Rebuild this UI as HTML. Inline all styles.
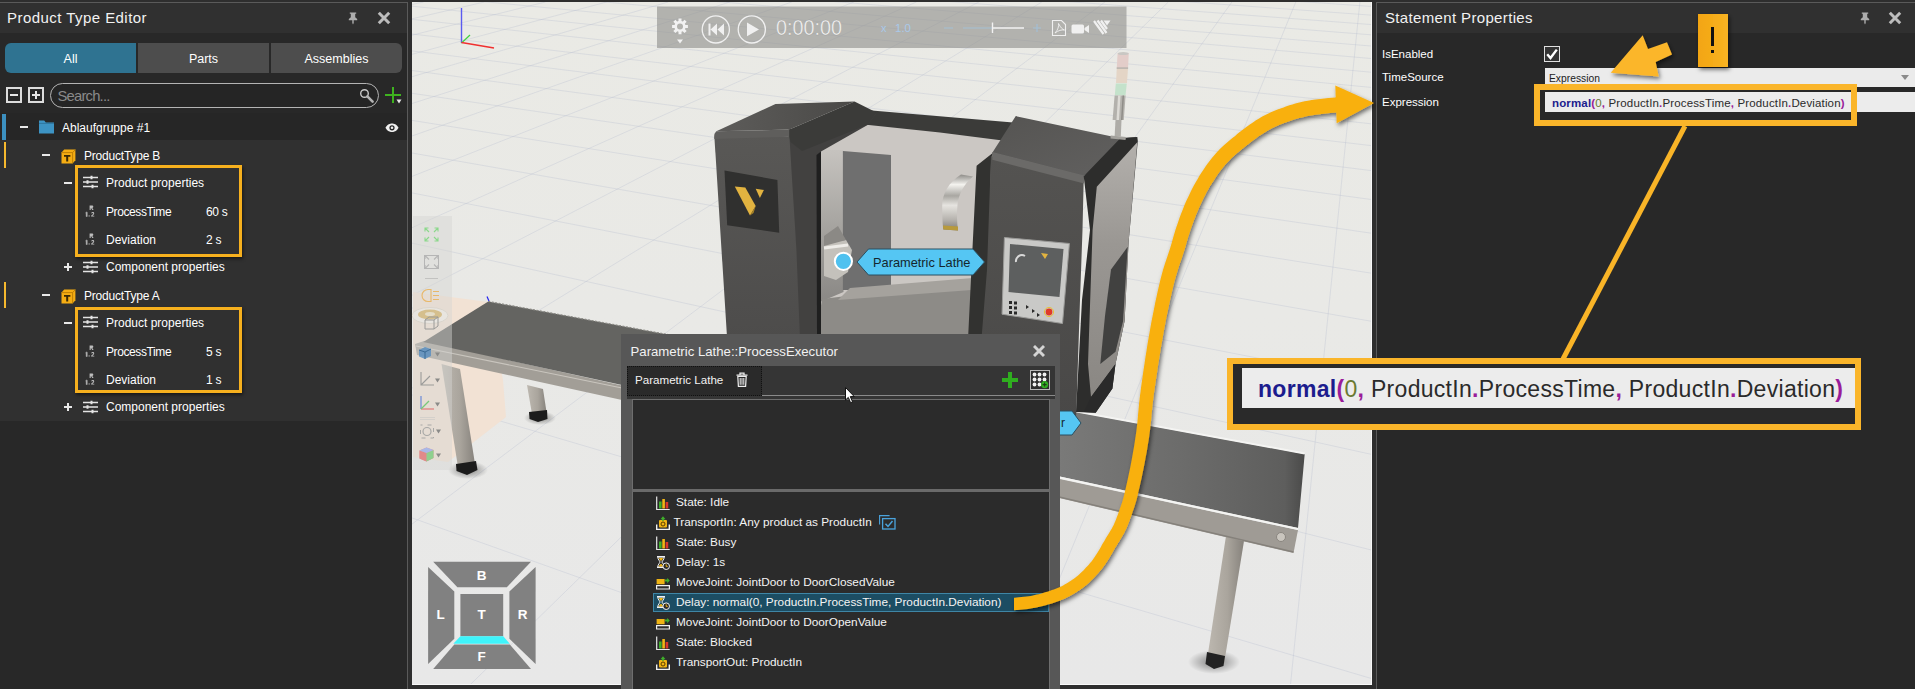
<!DOCTYPE html>
<html>
<head>
<meta charset="utf-8">
<title>Product Type Editor</title>
<style>
html,body{margin:0;padding:0;}
body{width:1915px;height:689px;overflow:hidden;background:#2e2e2e;position:relative;font-family:"Liberation Sans",sans-serif;color:#f0f0f0;}
.abs{position:absolute;}
.t{position:absolute;white-space:nowrap;line-height:1;}
/* left panel */
#lp{left:0;top:2px;width:408px;height:687px;background:#282828;border-top:1px solid #5a5a5a;border-right:1px solid #5a5a5a;box-sizing:border-box;}
#lp .title{left:0;top:0;width:407px;height:30px;background:#303030;}
.tab{position:absolute;top:40px;height:30px;background:#4d4d4d;text-align:center;font-size:12.5px;line-height:33px;color:#fff;height:30px;overflow:hidden;}
.row{position:absolute;left:0;width:407px;height:28px;background:#303030;}
.row .tx{position:absolute;top:0;line-height:28px;font-size:12.2px;color:#fff;white-space:nowrap;}
.pm{position:absolute;width:8px;height:2px;background:#e8e8e8;}
.pmv{position:absolute;width:2px;height:8px;background:#e8e8e8;}
.hl{position:absolute;border:3px solid #f6b01e;box-sizing:border-box;}
/* right panel */
#rp{left:1376px;top:2px;width:539px;height:687px;background:#282828;border-top:1px solid #5a5a5a;border-left:1px solid #5a5a5a;box-sizing:border-box;}
#rp .title{left:0;top:0;width:538px;height:30px;background:#303030;}
/* viewport */
#vp{left:412px;top:2px;width:960px;height:683px;background:linear-gradient(#eaeae5,#e9e9e6 45%,#e8e8e8);overflow:hidden;}
.expr b{color:#1c1c8e;font-weight:700;}.expr i{font-style:normal;color:#9a1c9a;font-weight:700;}.expr u{text-decoration:none;color:#6a7a32;}
/* dialog */
#dlg{left:621px;top:334px;width:439px;height:355px;background:#575757;}
</style>
</head>
<body>

<!-- ================= VIEWPORT ================= -->
<div id="vp" class="abs">
<svg id="scene" class="abs" style="left:0;top:0" width="960" height="683" viewBox="412 2 960 683">
<!--SCENE-->
<defs>
<linearGradient id="gFrontL" x1="0" y1="0" x2="0" y2="1"><stop offset="0" stop-color="#595856"/><stop offset="1" stop-color="#4d4c4b"/></linearGradient>
<linearGradient id="gFrontR" x1="0" y1="0" x2="0" y2="1"><stop offset="0" stop-color="#545351"/><stop offset="1" stop-color="#494847"/></linearGradient>
<linearGradient id="gChuck" x1="0" y1="0" x2="1" y2="0"><stop offset="0" stop-color="#8f8d88"/><stop offset="0.35" stop-color="#f1f0ec"/><stop offset="0.7" stop-color="#b5b2ac"/><stop offset="1" stop-color="#77746f"/></linearGradient>
<linearGradient id="gBelt" x1="0" y1="0" x2="1" y2="0"><stop offset="0" stop-color="#7a7a79"/><stop offset="0.5" stop-color="#6c6c6b"/><stop offset="0.92" stop-color="#5e5e5d"/><stop offset="1" stop-color="#4a4a49"/></linearGradient>
<linearGradient id="gLeg" x1="0" y1="0" x2="1" y2="0"><stop offset="0" stop-color="#bdb8b0"/><stop offset="0.55" stop-color="#aaa59d"/><stop offset="1" stop-color="#86827c"/></linearGradient>
<radialGradient id="gShadow"><stop offset="0" stop-color="#000" stop-opacity="0.45"/><stop offset="1" stop-color="#000" stop-opacity="0"/></radialGradient>
<filter id="blur1"><feGaussianBlur stdDeviation="0.6"/></filter>
</defs>
<path d="M412 -60.2L1372 6.5M412 -54.3L1372 15.2M412 -48.0L1372 24.6M412 -41.0L1372 34.9M412 -33.4L1372 46.1M412 -25.0L1372 58.6M412 -15.7L1372 72.3M412 -5.3L1372 87.5M412 6.2L1372 104.6M412 19.3L1372 123.9M412 34.0L1372 145.7M412 50.9L1372 170.7M412 70.5L1372 199.6M412 93.3L1372 233.3M412 120.4L1372 273.3M412 153.0L1372 321.4M412 192.9L1372 380.4M412 243.1L1372 454.5M412 307.9L1372 550.2M412 394.9L1372 678.7M412 517.9L1372 860.4M412 705.0L1372 1136.8M412 4.5L423.5 2M412 18.8L484.3 2M412 35.2L545.3 2M412 54.3L606.6 2M412 76.7L668.1 2M412 103.5L729.8 2M412 136.0L791.7 2M412 176.4L853.9 2M412 227.7L916.3 2M412 295.3L978.9 2M412 388.2L1041.8 2M412 524.1L1104.9 2M412 741.6L1168.3 2M412 1145.9L1231.9 2M412 2158.5L1295.8 2M412 9323.8L1359.9 2" stroke="#b4b8cc" stroke-opacity="0.3" stroke-width="1" fill="none"/>
<path d="M461.5 8V43" stroke="#5a5af0" stroke-width="1.4"/><path d="M461.5 43L470 35" stroke="#3fd23f" stroke-width="1.2"/><path d="M461.5 42.5L494 48" stroke="#f03030" stroke-width="1.4"/>
<path d="M413 292L432 294.5L488 302L503 380L506 417L470 445L448 462L413 457Z" fill="#f2e2d4"/>
<ellipse cx="430" cy="315.500" rx="18" ry="8" fill="#f7f3ec" stroke="#d8cfc0" stroke-width="0.8"/><ellipse cx="430" cy="314.500" rx="12" ry="5" fill="#d6ad55"/><ellipse cx="430" cy="314" rx="5" ry="2" fill="#f1e3c0"/>
<ellipse cx="468" cy="470" rx="20" ry="9" fill="url(#gShadow)"/><ellipse cx="540" cy="418" rx="16" ry="7" fill="url(#gShadow)"/>
<path d="M527 385L543 389L546.5 412L532 414Z" fill="url(#gLeg)"/><path d="M529 412L547 410L547.5 419L538 422L529.5 419Z" fill="#1c1c1c"/>
<path d="M441.5 364L460 369L475 464L458 467Z" fill="url(#gLeg)"/><path d="M456 464L476 461L477.5 470L467 475L456.5 471Z" fill="#1c1c1c"/>
<path d="M415 344L424 341L622 385.5L622 400L417 355Z" fill="#a29e97"/><path d="M416 346L622 388" stroke="#c9c5be" stroke-width="1.2"/>
<path d="M488.3 301.4L700 340.500L700 400L622 385L423.3 342Z" fill="#646461"/>
<path d="M488.3 301.4L700 340.500" stroke="#8a8984" stroke-width="1.2" stroke-dasharray="2 1.5"/>
<path d="M487 296.5L489 301" stroke="#2222ee" stroke-width="1.2"/>
<ellipse cx="1214" cy="662" rx="26" ry="12" fill="url(#gShadow)"/>
<path d="M1226 536L1244 541L1224 664L1207 660Z" fill="url(#gLeg)"/><path d="M1207 652L1225 656L1223.5 666L1214 669L1205.5 664Z" fill="#222"/>
<path d="M1055 478L1298 530L1293.5 553L1055 497Z" fill="#9f9b95"/><path d="M1055 496L1293.5 552" stroke="#85817b" stroke-width="1.5"/>
<circle cx="1281" cy="537" r="4.5" fill="#c9c5be" stroke="#8a8680" stroke-width="1"/>
<path d="M1055 408L1304.7 454L1298 528L1055 475.5Z" fill="url(#gBelt)"/>
<path d="M1055 407.5L1304.7 453.5" stroke="#f4f4f2" stroke-width="2"/><path d="M1055 476.5L1298 529" stroke="#f4f4f2" stroke-width="2"/>
<defs><linearGradient id="gTopL" x1="0" y1="0" x2="1" y2="0"><stop offset="0" stop-color="#5d5c5a"/><stop offset="1" stop-color="#4a4947"/></linearGradient><linearGradient id="gTopR" x1="0" y1="0" x2="1" y2="1"><stop offset="0" stop-color="#555452"/><stop offset="1" stop-color="#626160"/></linearGradient><linearGradient id="gSide" x1="0" y1="0" x2="0" y2="1"><stop offset="0" stop-color="#b3b0ac"/><stop offset="0.4" stop-color="#9a9793"/><stop offset="1" stop-color="#8a8783"/></linearGradient></defs>
<path d="M820 118L1000 138L985 340L820 340Z" fill="#cbc7c3"/>
<path d="M860 109.500L1016 122.8L1002.7 140.500L940 132.500L864 124.5Z" fill="#3b3b39"/>
<defs><linearGradient id="gIW" x1="0" y1="0" x2="0" y2="1"><stop offset="0" stop-color="#c6c3bf"/><stop offset="0.55" stop-color="#a3a19d"/><stop offset="1" stop-color="#8a8885"/></linearGradient></defs><path d="M820 150L843.500 150L843.500 292L820 302Z" fill="url(#gIW)"/>
<path d="M842.9 150.9L891 155L891 290L842.9 290Z" fill="#6f6f6f"/>
<path d="M822 299L985 279L985 345L815 345Z" fill="#8d8b87"/><path d="M850 288L985 277L985 289L838 300Z" fill="#a5a29d"/>
<defs><linearGradient id="gCh2" x1="0" y1="0" x2="0" y2="1"><stop offset="0" stop-color="#8e8c88"/><stop offset="0.18" stop-color="#f4f3ef"/><stop offset="0.38" stop-color="#a9a7a2"/><stop offset="0.55" stop-color="#e6e4e0"/><stop offset="0.8" stop-color="#b7b4af"/><stop offset="1" stop-color="#7e7b76"/></linearGradient></defs>
<path d="M961 174.500C949 182 942 194 942.200 206C942.300 216 942.500 223 943.300 229.500L958 230.500C957 222 956.500 214 957.500 205C958.500 194 964 184 973 176.500Z" fill="url(#gCh2)"/>
<path d="M943 225.500L958 226.500L958 230.500L943.300 229.500Z" fill="#b89a3c"/>
<path d="M824 243L846 240L852 250L848 272L836 280L824 276Z" fill="#c4c1bb"/><path d="M824 236L838 226L846 240L824 246Z" fill="#8b8985"/><path d="M824 248L848 245" stroke="#eeece8" stroke-width="3"/>
<path d="M788.4 129.5L876.500 113.2L868 124.8L821 151.5L821 340L798.500 340L795 250L788.400 137Z" fill="#424140"/>
<path d="M816.5 155L821 151.500L821 340L817 340Z" fill="#1f1f1f"/>
<path d="M714.4 137Q714.400 133 718 133L789.4 136.5L796.4 250L800 340L727.200 340Z" fill="url(#gFrontL)"/>
<path d="M714.4 134L716.3 131.3L789.4 129.5L789.4 136.8L714.4 139Z" fill="#5f5e5c"/>
<path d="M716.3 131.3L775.5 104L854.5 101.6L789.4 129.5Z" fill="url(#gTopL)"/>
<path d="M789.4 129.5L854.5 101.6L876.500 112.500L868 124.500L802 151L790.500 142L789.4 136.500Z" fill="#3b3b39"/>
<path d="M724.5 170.6L777.4 180L779.2 232.8L727.2 225.3Z" fill="#30302f"/>
<path d="M734.8 186.4L745.3 187.400L755.7 206.1L750 215.4Z" fill="#e2b340"/><path d="M750 215.4L755.7 206.1L753.500 213Z" fill="#a98426"/><path d="M755.7 188.7L763.9 189.9L759.9 198Z" fill="#e2b340"/>
<path d="M993 152.7L976.6 165.8L971.4 270L968 340L988 340L991 163.2Z" fill="#323230"/>
<path d="M991 156L1083.7 179L1082.500 230L1080 300L1076 420L975 420L987 270Z" fill="url(#gFrontR)"/>
<path d="M992.3 152.7L1015.8 116.1L1120.3 138.3L1137.3 137L1083.7 176.2Z" fill="url(#gTopR)"/>
<path d="M992.3 152L1084 175.500L1084 183.500L992.3 159.800Z" fill="#6b6a68"/>
<path d="M1083.7 176.2L1120.3 138.3L1137.3 137L1137.800 141L1128.600 242L1124.600 321L1115.500 364L1112.400 388.400L1095.700 412.800L1076 412L1082 300L1090 230Z" fill="#2d2d2c"/>
<path d="M1096.8 186.7L1137.3 142.3L1128.600 242L1124.600 321L1115.500 364L1091 397L1088 364L1092.600 230Z" fill="url(#gSide)"/>
<path d="M1111 269.600L1127.700 246.800L1123 321.400L1115.500 351.800L1100.300 364L1105 316Z" fill="#414140"/>
<path d="M1091 397L1115.500 364L1112.400 388.400L1095.700 412.800L1084 412Z" fill="#2a2a2a"/>
<path d="M1004.4 237.5L1069.4 243.500L1062.5 323.5L1002 314.2Z" fill="#c9c9c7" stroke="#9a9a98" stroke-width="1"/>
<path d="M1010 244L1063.5 249L1059.5 297L1008.5 292Z" fill="#5d5f5f"/>
<path d="M1016 262a6 6 0 0 1 9-6" stroke="#d8d8d8" stroke-width="2" fill="none"/><path d="M1041 253l4 6 3-5z" fill="#e2b340"/>
<circle cx="1049" cy="312" r="3.4" fill="#e03a2a"/><circle cx="1049" cy="312" r="4.6" fill="none" stroke="#e8c23a" stroke-width="1"/>
<path d="M1009 301h3v3h-3zM1014 301.5h3v3h-3zM1009 306h3v3h-3zM1014 306.5h3v3h-3zM1009 311h3v3h-3zM1014 311.5h3v3h-3zM1026 305l3 2-3 2zM1032 309l3 2-3 2zM1037 313l3 2-3 2z" fill="#2a2a2a"/>
<path d="M1117.600 53L1128.800 53L1128 68L1116.800 68Z" fill="#e3cdc9"/><ellipse cx="1123.200" cy="53.500" rx="5.400" ry="1.600" fill="#c9c7c3"/><path d="M1116.800 68L1128 68L1127 83L1116 83Z" fill="#e4d5c6"/><path d="M1116.700 67.300h11.400v1.600h-11.400z" fill="#b9b5af"/><path d="M1115.800 83.500L1126.800 83.500L1125.500 95.500L1114.800 95.500Z" fill="#c4e2cb"/><path d="M1114.600 95.500L1125.600 95.500L1123.800 120L1112.600 120Z" fill="#b3b1ac"/><path d="M1118 95.500L1120.500 95.500L1119 120L1116.500 120Z" fill="#dddbd6"/><path d="M1122.500 95.500L1124 95.500L1122.500 120L1121 120Z" fill="#8f8d88"/><path d="M1115.500 120L1121.500 120L1120.800 136.500L1114.600 136.500Z" fill="#aeaca7"/><path d="M1110.700 135.600L1126 137L1125.500 140L1110.500 138.500Z" fill="#a3a19c"/>
<path d="M857 262L868.5 249H973L984.5 262L973 275H868.5Z" fill="#55c6f3" stroke="#2b4f60" stroke-width="1"/>
<circle cx="843.4" cy="261.3" r="8.6" fill="#4fc1ef" stroke="#fff" stroke-width="2"/>
<text x="873" y="266.5" font-family="Liberation Sans, sans-serif" font-size="12.8" fill="#14262e">Parametric Lathe</text>
<path d="M1040 411H1072L1081 423L1072 435H1040Z" fill="#55c6f3" stroke="#2b4f60" stroke-width="1"/><text x="1061" y="427" font-family="Liberation Sans, sans-serif" font-size="12" fill="#14262e">r</text>
<rect x="657" y="6.5" width="469.5" height="41.5" fill="#8f8f8d" fill-opacity="0.62"/>
<path d="M684.5 26.4L687.9 26.4M683.2 29.6L685.6 32.0M680.0 30.9L680.0 34.3M676.8 29.6L674.4 32.0M675.5 26.4L672.1 26.4M676.8 23.2L674.4 20.8M680.0 21.9L680.0 18.5M683.2 23.2L685.6 20.8" stroke="#f2f2f2" stroke-width="3"/><circle cx="680" cy="26.4" r="4.3" fill="none" stroke="#f2f2f2" stroke-width="2.6"/><path d="M677 39.5h6l-3 4z" fill="#f2f2f2"/>
<circle cx="715.8" cy="29.4" r="13.6" fill="none" stroke="#f0f0f0" stroke-width="1.3"/><path d="M708.5 23.5h2v12h-2zM717 23.5v12l-6.5-6zM724 23.5v12l-6.5-6z" fill="#f0f0f0"/>
<circle cx="751.8" cy="29.4" r="13.6" fill="none" stroke="#f0f0f0" stroke-width="1.3"/><path d="M747 22.5L759 29.4L747 36.3Z" fill="#f0f0f0"/>
<text x="776" y="34.5" font-family="Liberation Sans, sans-serif" font-size="21.5" fill="#f2f2f2" textLength="66" lengthAdjust="spacingAndGlyphs" stroke="#8f8f8d" stroke-width="0.5" stroke-opacity="0.6">0:00:00</text>
<text x="881" y="32" font-family="Liberation Sans, sans-serif" font-size="11" fill="#a9c9ea">x</text><text x="895" y="32" font-family="Liberation Sans, sans-serif" font-size="11.5" fill="#a9c9ea">1.0</text>
<path d="M944 28h9M963 28h29M1033 28h8M1037 24v8" stroke="#a4bfd4" stroke-width="1.2"/><path d="M992 28h32M992.5 22.5v10.5" stroke="#f2f2f2" stroke-width="1.4"/>
<path d="M1052.5 20.5h9l4 4v11h-13z" fill="none" stroke="#f0f0f0" stroke-width="1.1"/><path d="M1055 33c3-3 4-7 3.5-9.5c2 4 4 6 6 6.500c-3-.5-6 .5-9.500 3z" fill="none" stroke="#f0f0f0" stroke-width="0.9"/>
<rect x="1071.500" y="24.500" width="12.500" height="9" rx="1.5" fill="#f0f0f0"/><path d="M1084.500 28l4.500-3v8l-4.500-3z" fill="#f0f0f0"/>
<path d="M1094 21l9.500 13M1097.500 20.500l9 12.500M1101 20.500l6 8.500" stroke="#f0f0f0" stroke-width="2.2"/><path d="M1103.500 20.500h7l-3.500 5z" fill="#f0f0f0"/>
<rect x="413" y="216" width="39" height="254" fill="#d4d4d2" fill-opacity="0.45"/>
<path d="M429.0 232.0L425.0 228.0M428.5 228.0H425.0V231.5M434.0 232.0L438.0 228.0M434.5 228.0H438.0V231.5M429.0 237.0L425.0 241.0M428.5 241.0H425.0V237.5M434.0 237.0L438.0 241.0M434.5 241.0H438.0V237.5" stroke="#8bd88b" stroke-width="1.1" fill="none"/>
<rect x="424.500" y="255.500" width="14" height="13" fill="none" stroke="#b5b5b5" stroke-width="1"/><path d="M429.0 259.5L425.0 255.5M428.5 255.5H425.0V259.0M434.0 259.5L438.0 255.5M434.5 255.5H438.0V259.0M429.0 264.5L425.0 268.5M428.5 268.5H425.0V265.0M434.0 264.5L438.0 268.5M434.5 268.5H438.0V265.0" stroke="#b5b5b5" stroke-width="1.1" fill="none"/>
<path d="M425 278.500h13" stroke="#c2c2c0" stroke-width="1"/>
<path d="M431 289.500h-3a6 6 0 0 0 0 12h3zM433 291.500h6M433 295.500h6M433 299.500h6" stroke="#e8b86a" stroke-width="1.1" fill="none"/>
<path d="M425 320l4-3h9v9l-4 3h-9zM425 320h9v9M434 320l4-3" stroke="#9a9a98" stroke-width="1" fill="none"/>
<path d="M419 350l6-3 6 2v7l-6 3-6-2.500z" fill="#5b8fc0" fill-opacity="0.85"/><path d="M419 350l6 2 6-3M425 352v7" stroke="#2e5f8a" stroke-width="0.8" fill="none"/><path d="M435 352.500h5l-2.500 4z" fill="#8a8a88"/>
<path d="M421 372v13h13M421 385l9-9" stroke="#9c9c9a" stroke-width="1.1" fill="none"/><path d="M435 378.500h5l-2.500 4z" fill="#8a8a88"/>
<path d="M421 396v13" stroke="#6a8ad8" stroke-width="1.2"/><path d="M421 409h13" stroke="#e07a7a" stroke-width="1.2"/><path d="M421 409l8-8" stroke="#7ac87a" stroke-width="1.2"/><path d="M435 402.500h5l-2.500 4z" fill="#8a8a88"/>
<path d="M420 417.500h15M420 419.500h15" stroke="#c8c8c6" stroke-width="0.6"/>
<rect x="420.500" y="425" width="13" height="13" fill="none" stroke="#a8a8a6" stroke-width="1" stroke-dasharray="4 5" stroke-dashoffset="2"/><circle cx="427" cy="431.500" r="4" fill="none" stroke="#a8a8a6" stroke-width="1.2"/><path d="M436 429.500h5l-2.500 4z" fill="#8a8a88"/>
<path d="M419.500 450.500l7-3 7 2.500v8l-7 3.500-7-3z" fill="#e39090"/><path d="M419.500 450.500l7 2.500v8.500l-7-3z" fill="#e08a8a"/><path d="M426.500 453l7-3v8l-7 3.500z" fill="#8ed08e"/><path d="M419.500 450.500l7-3 7 2.500-7 3z" fill="#a9b8e8"/><path d="M436 453.500h5l-2.500 4z" fill="#8a8a88"/>
<path d="M433.2 561.7H531L506.8 587.3H457.4Z" fill="#818181"/><path d="M433.2 669H531L509.8 644.4H454.3Z" fill="#818181"/><path d="M428.1 567.1V664L454.3 638.8V591.4Z" fill="#818181"/><path d="M535.6 567.1V664L509.4 638.8V591.4Z" fill="#818181"/><rect x="460.4" y="594" width="42.8" height="42.3" fill="#818181"/>
<path d="M460.4 636.3H503.2L509.8 643.8H453.3Z" fill="#3ff4fb"/>
<text x="481.6" y="580" text-anchor="middle" font-family="Liberation Sans, sans-serif" font-weight="700" font-size="13.5" fill="#fff">B</text>
<text x="481.6" y="619.4" text-anchor="middle" font-family="Liberation Sans, sans-serif" font-weight="700" font-size="13.5" fill="#fff">T</text>
<text x="440.6" y="619.4" text-anchor="middle" font-family="Liberation Sans, sans-serif" font-weight="700" font-size="13.5" fill="#fff">L</text>
<text x="522.5" y="619.4" text-anchor="middle" font-family="Liberation Sans, sans-serif" font-weight="700" font-size="13.5" fill="#fff">R</text>
<text x="481.6" y="661" text-anchor="middle" font-family="Liberation Sans, sans-serif" font-weight="700" font-size="13.5" fill="#fff">F</text>
</svg>
<div class="abs" style="left:0;top:0;width:960px;height:683px;box-shadow:inset -1px -1px 0 #f8f8f8;"></div>
</div>

<!-- ================= LEFT PANEL ================= -->
<div id="lp" class="abs">
  <div class="title abs"></div>
  <div class="t" style="left:7px;top:7px;font-size:15px;letter-spacing:0.45px;color:#f2f2f2;">Product Type Editor</div>
<!--LP-->
  <!-- pin + close -->
  <svg class="abs" style="left:346px;top:7px" width="14" height="16" viewBox="0 0 14 16"><path d="M3.8 2.5h6.4v1.3h-1v3.400l2 1.800v1.200H7.700v2.800l-.7 1.500-.7-1.500v-2.800H2.800V9l2-1.800V3.800h-1z" fill="#adadad"/></svg>
  <svg class="abs" style="left:377px;top:8px" width="14" height="14" viewBox="0 0 14 14"><path d="M1.800 1.800L12.200 12.200M12.200 1.800L1.800 12.200" stroke="#bcbcbc" stroke-width="3"/></svg>
  <!-- tabs -->
  <div class="tab" style="left:5px;width:131px;background:#2f7391;border-radius:6px 0 0 6px;">All</div>
  <div class="tab" style="left:138px;width:131px;">Parts</div>
  <div class="tab" style="left:271px;width:131px;border-radius:0 6px 6px 0;">Assemblies</div>
  <!-- collapse / expand -->
  <div class="abs" style="left:6px;top:84px;width:16px;height:16px;box-sizing:border-box;border:2px solid #dcdcdc;"></div>
  <div class="pm" style="left:10px;top:91px;"></div>
  <div class="abs" style="left:28px;top:84px;width:16px;height:16px;box-sizing:border-box;border:2px solid #dcdcdc;"></div>
  <div class="pm" style="left:32px;top:91px;"></div><div class="pmv" style="left:35px;top:88px;"></div>
  <!-- search -->
  <div class="abs" style="left:50px;top:80px;width:329px;height:25px;box-sizing:border-box;border:1px solid #b4b4b4;border-radius:13px;background:#252525;"></div>
  <div class="t" style="left:57.5px;top:85.5px;font-size:14.8px;letter-spacing:-0.8px;color:#8a8a8a;">Search...</div>
  <svg class="abs" style="left:358px;top:84px" width="18" height="18" viewBox="0 0 18 18"><circle cx="6.5" cy="6.5" r="3.8" fill="none" stroke="#c8c8c8" stroke-width="1.4"/><path d="M9.4 9.4L14.6 14.6" stroke="#b4b4b4" stroke-width="2.6" stroke-linecap="round"/></svg>
  <div class="abs" style="left:385px;top:91px;width:16px;height:2px;background:#3fb31f;"></div>
  <div class="abs" style="left:392px;top:84px;width:2px;height:16px;background:#3fb31f;"></div>
  <svg class="abs" style="left:396px;top:96px" width="6" height="5" viewBox="0 0 6 5"><path d="M0.5 0.5h5L3 4.5z" fill="#e6e6e6"/></svg>
  <!-- tree rows -->
  <div class="row" style="top:110px;height:27px;background:#262626;"></div>
  <div class="row" style="top:137px;height:281px;"></div>
  <div class="abs" style="left:2px;top:111px;width:4px;height:26px;background:#3c90c0;"></div>
  <div class="abs" style="left:4px;top:139px;width:2px;height:26px;background:#f5b82e;"></div>
  <div class="abs" style="left:4px;top:279px;width:2px;height:26px;background:#f5b82e;"></div>
  <!-- row: Ablaufgruppe -->
  <div class="pm" style="left:20px;top:123px;"></div>
  <svg class="abs" style="left:39px;top:117px" width="15" height="14" viewBox="0 0 15 14"><path d="M0 0.6h5.2l1.6 1.9H15V13.4H0z" fill="#3d93c3"/><path d="M0 3.4h15" stroke="#2b6f96" stroke-width="0.8"/></svg>
  <div class="t" style="left:62px;top:119px;font-size:12px;color:#fff;">Ablaufgruppe #1</div>
  <svg class="abs" style="left:385px;top:119.5px" width="14" height="9.6" viewBox="0 0 16 11"><path d="M0.5 5.5C3 1.3 5.6 0.6 8 0.6s5 0.7 7.5 4.9C13 9.7 10.4 10.4 8 10.4S3 9.7 0.5 5.5z" fill="#f0f0f0"/><circle cx="8" cy="5.5" r="3" fill="#262626"/><circle cx="8" cy="5.5" r="1.5" fill="#f0f0f0"/></svg>
  <div class="pm" style="left:42px;top:151px;"></div>
  <svg class="abs" style="left:60.500px;top:146px" width="15" height="15" viewBox="0 0 15 15"><path d="M0.5 3.6L3.2 0.6H14.4V11.2L11.6 14.4H0.5z" fill="#f5ad13"/><path d="M0.5 3.6H11.6V14.4M11.6 3.6L14.4 0.6" fill="none" stroke="#b97a05" stroke-width="0.9"/><path d="M3 6h6.4v1.8H7.2V12.6H5.2V7.8H3z" fill="#3b2a05"/></svg>
  <div class="t" style="left:84px;top:147px;font-size:12px;letter-spacing:-0.2px;color:#fff;">ProductType B</div>
  <div class="pm" style="left:64px;top:179px;"></div>
  <svg class="abs" style="left:83px;top:172px" width="15" height="14" viewBox="0 0 15 14"><path d="M0 2.5h15M0 7h15M0 11.5h15" stroke="#e4e4e4" stroke-width="1.3"/><path d="M8.5 0.8v3.4M4.5 5.3v3.4M9.5 9.8v3.4" stroke="#e4e4e4" stroke-width="2"/></svg>
  <div class="t" style="left:106px;top:174px;font-size:12px;color:#fff;">Product properties</div>
  <svg class="abs" style="left:85px;top:202px" width="12" height="12" viewBox="0 0 12 12"><path d="M4.6 0.5h2.2c1 0 1.5 0.5 1.5 1.3 0 0.7-0.4 1.1-1 1.3L8.6 5H7.3L6.2 3.3H5.7V5H4.6z" fill="#bdbdbd"/><path d="M1.2 7.2h1v4.3h-1zM0.4 8l1-0.9" stroke="#bdbdbd" stroke-width="0.5" fill="#bdbdbd"/><rect x="3.6" y="10.4" width="1.1" height="1.1" fill="#bdbdbd"/><path d="M6.2 7.9c0.3-0.5 0.8-0.8 1.5-0.8 0.9 0 1.5 0.5 1.5 1.3 0 0.6-0.3 1-1 1.6l-0.8 0.7h1.9v0.9H6.1v-0.8l1.6-1.5c0.4-0.4 0.5-0.6 0.5-0.9 0-0.3-0.2-0.5-0.6-0.5-0.4 0-0.6 0.2-0.8 0.6z" fill="#bdbdbd"/></svg>
  <div class="t" style="left:106px;top:203px;font-size:12px;letter-spacing:-0.4px;color:#fff;">ProcessTime</div>
  <div class="t" style="left:206px;top:203px;font-size:12px;letter-spacing:-0.3px;color:#fff;">60 s</div>
  <svg class="abs" style="left:85px;top:230px" width="12" height="12" viewBox="0 0 12 12"><path d="M4.6 0.5h2.2c1 0 1.5 0.5 1.5 1.3 0 0.7-0.4 1.1-1 1.3L8.6 5H7.3L6.2 3.3H5.7V5H4.6z" fill="#bdbdbd"/><path d="M1.2 7.2h1v4.3h-1zM0.4 8l1-0.9" stroke="#bdbdbd" stroke-width="0.5" fill="#bdbdbd"/><rect x="3.6" y="10.4" width="1.1" height="1.1" fill="#bdbdbd"/><path d="M6.2 7.9c0.3-0.5 0.8-0.8 1.5-0.8 0.9 0 1.5 0.5 1.5 1.3 0 0.6-0.3 1-1 1.6l-0.8 0.7h1.9v0.9H6.1v-0.8l1.6-1.5c0.4-0.4 0.5-0.6 0.5-0.9 0-0.3-0.2-0.5-0.6-0.5-0.4 0-0.6 0.2-0.8 0.6z" fill="#bdbdbd"/></svg>
  <div class="t" style="left:106px;top:231px;font-size:12px;letter-spacing:0px;color:#fff;">Deviation</div>
  <div class="t" style="left:206px;top:231px;font-size:12px;letter-spacing:-0.3px;color:#fff;">2 s</div>
  <div class="pm" style="left:64px;top:263px;"></div>
  <div class="pmv" style="left:67px;top:260px;"></div>
  <svg class="abs" style="left:83px;top:257px" width="15" height="14" viewBox="0 0 15 14"><path d="M0 2.5h15M0 7h15M0 11.5h15" stroke="#e4e4e4" stroke-width="1.3"/><path d="M8.5 0.8v3.4M4.5 5.3v3.4M9.5 9.8v3.4" stroke="#e4e4e4" stroke-width="2"/></svg>
  <div class="t" style="left:106px;top:258px;font-size:12px;color:#fff;">Component properties</div>
  <div class="pm" style="left:42px;top:291px;"></div>
  <svg class="abs" style="left:60.500px;top:286px" width="15" height="15" viewBox="0 0 15 15"><path d="M0.5 3.6L3.2 0.6H14.4V11.2L11.6 14.4H0.5z" fill="#f5ad13"/><path d="M0.5 3.6H11.6V14.4M11.6 3.6L14.4 0.6" fill="none" stroke="#b97a05" stroke-width="0.9"/><path d="M3 6h6.4v1.8H7.2V12.6H5.2V7.8H3z" fill="#3b2a05"/></svg>
  <div class="t" style="left:84px;top:287px;font-size:12px;letter-spacing:-0.2px;color:#fff;">ProductType A</div>
  <div class="pm" style="left:64px;top:319px;"></div>
  <svg class="abs" style="left:83px;top:312px" width="15" height="14" viewBox="0 0 15 14"><path d="M0 2.5h15M0 7h15M0 11.5h15" stroke="#e4e4e4" stroke-width="1.3"/><path d="M8.5 0.8v3.4M4.5 5.3v3.4M9.5 9.8v3.4" stroke="#e4e4e4" stroke-width="2"/></svg>
  <div class="t" style="left:106px;top:314px;font-size:12px;color:#fff;">Product properties</div>
  <svg class="abs" style="left:85px;top:342px" width="12" height="12" viewBox="0 0 12 12"><path d="M4.6 0.5h2.2c1 0 1.5 0.5 1.5 1.3 0 0.7-0.4 1.1-1 1.3L8.6 5H7.3L6.2 3.3H5.7V5H4.6z" fill="#bdbdbd"/><path d="M1.2 7.2h1v4.3h-1zM0.4 8l1-0.9" stroke="#bdbdbd" stroke-width="0.5" fill="#bdbdbd"/><rect x="3.6" y="10.4" width="1.1" height="1.1" fill="#bdbdbd"/><path d="M6.2 7.9c0.3-0.5 0.8-0.8 1.5-0.8 0.9 0 1.5 0.5 1.5 1.3 0 0.6-0.3 1-1 1.6l-0.8 0.7h1.9v0.9H6.1v-0.8l1.6-1.5c0.4-0.4 0.5-0.6 0.5-0.9 0-0.3-0.2-0.5-0.6-0.5-0.4 0-0.6 0.2-0.8 0.6z" fill="#bdbdbd"/></svg>
  <div class="t" style="left:106px;top:343px;font-size:12px;letter-spacing:-0.4px;color:#fff;">ProcessTime</div>
  <div class="t" style="left:206px;top:343px;font-size:12px;letter-spacing:-0.3px;color:#fff;">5 s</div>
  <svg class="abs" style="left:85px;top:370px" width="12" height="12" viewBox="0 0 12 12"><path d="M4.6 0.5h2.2c1 0 1.5 0.5 1.5 1.3 0 0.7-0.4 1.1-1 1.3L8.6 5H7.3L6.2 3.3H5.7V5H4.6z" fill="#bdbdbd"/><path d="M1.2 7.2h1v4.3h-1zM0.4 8l1-0.9" stroke="#bdbdbd" stroke-width="0.5" fill="#bdbdbd"/><rect x="3.6" y="10.4" width="1.1" height="1.1" fill="#bdbdbd"/><path d="M6.2 7.9c0.3-0.5 0.8-0.8 1.5-0.8 0.9 0 1.5 0.5 1.5 1.3 0 0.6-0.3 1-1 1.6l-0.8 0.7h1.9v0.9H6.1v-0.8l1.6-1.5c0.4-0.4 0.5-0.6 0.5-0.9 0-0.3-0.2-0.5-0.6-0.5-0.4 0-0.6 0.2-0.8 0.6z" fill="#bdbdbd"/></svg>
  <div class="t" style="left:106px;top:371px;font-size:12px;letter-spacing:0px;color:#fff;">Deviation</div>
  <div class="t" style="left:206px;top:371px;font-size:12px;letter-spacing:-0.3px;color:#fff;">1 s</div>
  <div class="pm" style="left:64px;top:403px;"></div>
  <div class="pmv" style="left:67px;top:400px;"></div>
  <svg class="abs" style="left:83px;top:397px" width="15" height="14" viewBox="0 0 15 14"><path d="M0 2.5h15M0 7h15M0 11.5h15" stroke="#e4e4e4" stroke-width="1.3"/><path d="M8.5 0.8v3.4M4.5 5.3v3.4M9.5 9.8v3.4" stroke="#e4e4e4" stroke-width="2"/></svg>
  <div class="t" style="left:106px;top:398px;font-size:12px;color:#fff;">Component properties</div>
  <div class="hl" style="left:75px;top:162px;width:167px;height:92px;box-shadow:1px 2px 3px rgba(0,0,0,.5);"></div>
  <div class="hl" style="left:75px;top:304px;width:167px;height:86px;box-shadow:1px 2px 3px rgba(0,0,0,.5);"></div>
</div>

<!-- ================= DIALOG ================= -->
<div id="dlg" class="abs">
<!--DLG-->
<div class="t" style="left:9.5px;top:10.5px;font-size:13.2px;color:#f2f2f2;">Parametric Lathe::ProcessExecutor</div>
<svg class="abs" style="left:412px;top:10.5px" width="12" height="12" viewBox="0 0 12 12"><path d="M1 1L11 11M11 1L1 11" stroke="#d4d4d4" stroke-width="2.900"/></svg>
<div class="abs" style="left:6px;top:31.5px;width:428px;height:33.5px;background:#353535;"></div>
<div class="abs" style="left:140px;top:60.5px;width:294px;height:1px;background:#8a8a8a;"></div>
<div class="abs" style="left:6px;top:31.5px;width:134.5px;height:30px;background:#2a2a2a;box-sizing:border-box;border:1px dotted #111;"></div>
<div class="t" style="left:14px;top:39.5px;font-size:11.6px;color:#f2f2f2;">Parametric Lathe</div>
<svg class="abs" style="left:115px;top:38px" width="12" height="15" viewBox="0 0 12 15"><path d="M0.5 3.2h11M4 3V1.200h4V3" fill="none" stroke="#eee" stroke-width="1.3"/><path d="M1.800 4.500h8.400l-.600 9.800H2.400z" fill="none" stroke="#eee" stroke-width="1.2"/><path d="M4.200 6v6.800M6 6v6.800M7.800 6v6.800" stroke="#eee" stroke-width="1"/></svg>
<div class="abs" style="left:381px;top:43.5px;width:16px;height:4px;background:#2fae1f;"></div><div class="abs" style="left:387px;top:37.5px;width:4px;height:16px;background:#2fae1f;"></div>
<svg class="abs" style="left:409px;top:36px" width="20" height="20" viewBox="0 0 20 20"><rect x="0.5" y="0.5" width="19" height="19" fill="#2e2e2e" stroke="#b8b8b8"/><circle cx="4.5" cy="4.5" r="1.9" fill="#f2f2f2"/><circle cx="4.5" cy="9.5" r="1.9" fill="#f2f2f2"/><circle cx="4.5" cy="14.5" r="1.9" fill="#f2f2f2"/><circle cx="9.5" cy="4.5" r="1.9" fill="#f2f2f2"/><circle cx="9.5" cy="9.5" r="1.9" fill="#f2f2f2"/><circle cx="9.5" cy="14.5" r="1.9" fill="#f2f2f2"/><circle cx="14.5" cy="4.5" r="1.9" fill="#f2f2f2"/><circle cx="14.5" cy="9.5" r="1.9" fill="#f2f2f2"/><circle cx="14.600" cy="14.600" r="3.600" fill="#2fae1f"/><path d="M12.600 14.600h4M14.600 12.600v4" stroke="#1d3d17" stroke-width="1.100"/></svg>
<div class="abs" style="left:10.5px;top:65px;width:418.5px;height:300px;box-sizing:border-box;border:1px solid #6e6e6e;background:#2b2b2b;"></div>
<div class="abs" style="left:11px;top:155px;width:417.5px;height:2.5px;background:#6a6a6a;"></div>
<div class="abs" style="left:31.5px;top:258.5px;width:396.5px;height:19.5px;box-sizing:border-box;border:1px solid #3f86a6;background:#1c4d63;"></div>
<svg class="abs" style="left:35px;top:161.5px" width="14" height="14" viewBox="0 0 14 14"><path d="M0.700 0.500v13h13" fill="none" stroke="#e8e8e8" stroke-width="1.2"/><rect x="3" y="5.500" width="2.600" height="7" fill="#3fae2a"/><rect x="6.300" y="3" width="2.600" height="9.500" fill="#f0b414"/><rect x="9.600" y="6" width="2.600" height="6.500" fill="#d9342b"/></svg>
<div class="t" style="left:55px;top:163.2px;font-size:11.8px;color:#f4f4f4;">State: Idle</div>
<svg class="abs" style="left:35px;top:181.5px" width="14" height="14" viewBox="0 0 14 14"><path d="M0.700 8.500v5h12.600v-5" fill="none" stroke="#f0f0f0" stroke-width="1.400"/><rect x="3" y="4" width="8" height="7.500" rx="1" fill="#f0b414"/><circle cx="7" cy="8" r="2" fill="none" stroke="#5a3d00" stroke-width="1"/><path d="M7 0.300l2.500 3h-1.600v1.500h-1.800v-1.500h-1.600z" fill="#3fae2a"/></svg>
<div class="t" style="left:52.5px;top:183.2px;font-size:11.8px;color:#f4f4f4;">TransportIn: Any product as ProductIn</div>
<svg class="abs" style="left:35px;top:201.5px" width="14" height="14" viewBox="0 0 14 14"><path d="M0.700 0.500v13h13" fill="none" stroke="#e8e8e8" stroke-width="1.2"/><rect x="3" y="5.500" width="2.600" height="7" fill="#3fae2a"/><rect x="6.300" y="3" width="2.600" height="9.500" fill="#f0b414"/><rect x="9.600" y="6" width="2.600" height="6.500" fill="#d9342b"/></svg>
<div class="t" style="left:55px;top:203.2px;font-size:11.8px;color:#f4f4f4;">State: Busy</div>
<svg class="abs" style="left:35px;top:221.5px" width="14" height="14" viewBox="0 0 14 14"><path d="M1 0.600h8M1 11.400h8" stroke="#f0f0f0" stroke-width="1.200"/><path d="M1.800 1h6.400c0 3-2.200 3.800-2.200 5s2.200 2 2.200 5H1.800c0-3 2.200-3.800 2.200-5S1.800 4 1.800 1z" fill="none" stroke="#f0f0f0" stroke-width="1"/><path d="M3 2h4c-.3 1.600-1.200 2.200-2 3c-.8-.8-1.700-1.400-2-3zM2.800 10.600c.3-1.500 1.200-2 2.200-2.800c1 .8 1.900 1.300 2.200 2.800z" fill="#f0b414"/><circle cx="10.200" cy="10.200" r="3.300" fill="#2b2b2b" stroke="#f0f0f0" stroke-width="1"/><path d="M10.200 8.400v2h1.500" stroke="#f0b414" stroke-width="1" fill="none"/></svg>
<div class="t" style="left:55px;top:223.2px;font-size:11.8px;color:#f4f4f4;">Delay: 1s</div>
<svg class="abs" style="left:35px;top:241.5px" width="14" height="14" viewBox="0 0 14 14"><rect x="0.600" y="3" width="8" height="5.200" fill="#f0b414"/><path d="M9 3.600h2.200V2l2.600 2.600L11.200 7.200V5.600H9z" fill="#3fae2a"/><path d="M0.600 9.600h12.800v3.400H0.600z" fill="none" stroke="#f0f0f0" stroke-width="1.200"/></svg>
<div class="t" style="left:55px;top:243.2px;font-size:11.8px;color:#f4f4f4;">MoveJoint: JointDoor to DoorClosedValue</div>
<svg class="abs" style="left:35px;top:261.5px" width="14" height="14" viewBox="0 0 14 14"><path d="M1 0.600h8M1 11.400h8" stroke="#f0f0f0" stroke-width="1.200"/><path d="M1.800 1h6.400c0 3-2.200 3.800-2.200 5s2.200 2 2.200 5H1.800c0-3 2.200-3.800 2.200-5S1.800 4 1.800 1z" fill="none" stroke="#f0f0f0" stroke-width="1"/><path d="M3 2h4c-.3 1.600-1.200 2.200-2 3c-.8-.8-1.700-1.400-2-3zM2.800 10.600c.3-1.500 1.200-2 2.200-2.800c1 .8 1.900 1.300 2.200 2.800z" fill="#f0b414"/><circle cx="10.200" cy="10.200" r="3.300" fill="#2b2b2b" stroke="#f0f0f0" stroke-width="1"/><path d="M10.200 8.400v2h1.500" stroke="#f0b414" stroke-width="1" fill="none"/></svg>
<div class="t" style="left:55px;top:263.2px;font-size:11.8px;color:#f4f4f4;">Delay: normal(0, ProductIn.ProcessTime, ProductIn.Deviation)</div>
<svg class="abs" style="left:35px;top:281.5px" width="14" height="14" viewBox="0 0 14 14"><rect x="0.600" y="3" width="8" height="5.200" fill="#f0b414"/><path d="M9 3.600h2.200V2l2.600 2.600L11.200 7.200V5.600H9z" fill="#3fae2a"/><path d="M0.600 9.600h12.800v3.400H0.600z" fill="none" stroke="#f0f0f0" stroke-width="1.200"/></svg>
<div class="t" style="left:55px;top:283.2px;font-size:11.8px;color:#f4f4f4;">MoveJoint: JointDoor to DoorOpenValue</div>
<svg class="abs" style="left:35px;top:301.5px" width="14" height="14" viewBox="0 0 14 14"><path d="M0.700 0.500v13h13" fill="none" stroke="#e8e8e8" stroke-width="1.2"/><rect x="3" y="5.500" width="2.600" height="7" fill="#3fae2a"/><rect x="6.300" y="3" width="2.600" height="9.500" fill="#f0b414"/><rect x="9.600" y="6" width="2.600" height="6.500" fill="#d9342b"/></svg>
<div class="t" style="left:55px;top:303.2px;font-size:11.8px;color:#f4f4f4;">State: Blocked</div>
<svg class="abs" style="left:35px;top:321.5px" width="14" height="14" viewBox="0 0 14 14"><path d="M0.700 8.500v5h12.600v-5" fill="none" stroke="#f0f0f0" stroke-width="1.400"/><rect x="3" y="4" width="8" height="7.500" rx="1" fill="#f0b414"/><circle cx="7" cy="8" r="2" fill="none" stroke="#5a3d00" stroke-width="1"/><path d="M7 0.300l2.500 3h-1.600v1.500h-1.800v-1.500h-1.600z" fill="#3fae2a"/></svg>
<div class="t" style="left:55px;top:323.2px;font-size:11.8px;color:#f4f4f4;">TransportOut: ProductIn</div>
<svg class="abs" style="left:258px;top:181px" width="17" height="15" viewBox="0 0 17 15"><path d="M0.600 9.500V0.600h10" fill="none" stroke="#4aa3dc" stroke-width="1.100"/><rect x="3.600" y="3.600" width="12.400" height="10.400" fill="none" stroke="#4aa3dc" stroke-width="1.300"/><path d="M6.500 8.800l2.500 2.600 4.500-5.400" fill="none" stroke="#4aa3dc" stroke-width="1.500"/></svg>
</div>

<!-- ================= RIGHT PANEL ================= -->
<div id="rp" class="abs">
  <div class="title abs"></div>
  <div class="t" style="left:8px;top:7px;font-size:15px;letter-spacing:0.35px;color:#f2f2f2;">Statement Properties</div>
<!--RP-->
  <svg class="abs" style="left:481px;top:7px" width="14" height="16" viewBox="0 0 14 16"><path d="M3.8 2.5h6.4v1.3h-1v3.400l2 1.800v1.200H7.700v2.800l-.7 1.500-.7-1.500v-2.800H2.800V9l2-1.800V3.800h-1z" fill="#adadad"/></svg>
  <svg class="abs" style="left:511px;top:8px" width="14" height="14" viewBox="0 0 14 14"><path d="M1.800 1.800L12.200 12.200M12.200 1.800L1.800 12.200" stroke="#bcbcbc" stroke-width="3"/></svg>
  <div class="t" style="left:5px;top:46px;font-size:11.5px;color:#fff;">IsEnabled</div>
  <div class="t" style="left:5px;top:69px;font-size:11.5px;color:#fff;">TimeSource</div>
  <div class="t" style="left:5px;top:94px;font-size:11.5px;color:#fff;">Expression</div>
  <div class="abs" style="left:167px;top:43px;width:16px;height:16px;box-sizing:border-box;border:1px solid #e0e0e0;background:#333;"></div>
  <svg class="abs" style="left:167px;top:43px" width="16" height="16" viewBox="0 0 16 16"><path d="M3.2 8.2L6.5 12L12.8 3.6" fill="none" stroke="#fff" stroke-width="2.4"/></svg>
  <div class="abs" style="left:168px;top:65px;width:370px;height:19px;background:#ebebeb;"></div>
  <div class="t" style="left:172px;top:71px;font-size:10.3px;color:#1c1c1c;">Expression</div>
  <svg class="abs" style="left:524px;top:72px" width="8" height="5" viewBox="0 0 8 5"><path d="M0 0h8L4 5z" fill="#8a8a8a"/></svg>
  <div class="abs" style="left:168px;top:89px;width:370px;height:20px;background:#ececec;"></div>
  <div class="t expr" style="left:175px;top:95px;font-size:11.5px;letter-spacing:0.15px;color:#2a2a2a;"><b>normal</b><i>(</i><u>0</u><i>,</i> ProductIn<i>.</i>ProcessTime<i>,</i> ProductIn<i>.</i>Deviation<i>)</i></div>
</div>

<!-- ================= OVERLAY (arrows / highlights) ================= -->
<svg id="ov" class="abs" style="left:0;top:0;pointer-events:none" width="1915" height="689" viewBox="0 0 1915 689">
<!--OV-->
<defs>
<filter id="sh" x="-20%" y="-20%" width="140%" height="140%"><feDropShadow dx="1.5" dy="2.5" stdDeviation="2" flood-color="#000" flood-opacity="0.55"/></filter>
<linearGradient id="og" x1="0" y1="0" x2="1" y2="0"><stop offset="0" stop-color="#f3a511"/><stop offset="1" stop-color="#f8b322"/></linearGradient>
</defs>
<!--ARROW--><g filter="url(#sh)"><path d="M1014.0 597.8L1014.8 597.7L1016.7 597.5L1018.9 597.3L1021.4 597.1L1023.9 596.8L1026.5 596.5L1028.8 596.2L1030.9 595.9L1032.9 595.5L1034.8 595.1L1036.7 594.6L1038.6 594.2L1040.5 593.7L1042.3 593.2L1044.2 592.6L1046.1 592.0L1048.1 591.4L1050.1 590.8L1052.0 590.1L1053.9 589.5L1055.7 588.8L1057.6 588.0L1059.4 587.2L1061.2 586.4L1063.1 585.4L1065.0 584.3L1066.9 583.2L1068.9 582.0L1070.8 580.7L1072.7 579.5L1074.5 578.2L1076.1 577.0L1077.7 575.7L1079.1 574.5L1080.6 573.1L1082.0 571.8L1083.4 570.4L1084.7 569.0L1086.0 567.6L1087.3 566.2L1088.5 564.9L1089.5 563.7L1090.5 562.5L1091.5 561.4L1092.4 560.2L1093.3 558.9L1094.3 557.6L1095.3 556.1L1096.3 554.5L1097.4 552.8L1098.5 550.9L1099.7 548.9L1100.9 546.9L1102.0 544.8L1103.2 542.8L1104.5 540.7L1105.7 538.6L1106.9 536.6L1108.2 534.6L1109.4 532.6L1110.6 530.6L1111.7 528.7L1112.7 526.8L1113.7 525.0L1114.5 523.1L1115.4 521.1L1116.2 519.1L1116.9 517.1L1117.7 515.0L1118.4 512.9L1119.1 510.9L1119.8 508.8L1120.5 507.0L1121.1 505.3L1121.6 503.8L1122.1 502.3L1122.6 500.8L1123.1 499.0L1123.7 496.8L1124.3 494.2L1125.1 491.1L1125.9 487.5L1126.8 483.6L1127.7 479.5L1128.6 475.2L1129.5 470.9L1130.4 466.7L1131.2 462.6L1131.9 458.7L1132.6 454.7L1133.3 450.8L1134.0 446.9L1134.6 442.9L1135.2 439.0L1135.8 435.0L1136.4 431.1L1136.8 427.2L1137.3 423.2L1137.7 419.2L1138.0 415.2L1138.4 411.1L1138.8 407.1L1139.1 403.1L1139.6 399.2L1140.0 395.5L1140.5 391.9L1140.9 388.4L1141.4 384.9L1141.9 381.5L1142.4 378.0L1142.9 374.4L1143.4 370.7L1144.0 366.9L1144.6 362.9L1145.2 358.9L1145.8 354.9L1146.5 350.8L1147.1 346.7L1147.8 342.6L1148.5 338.5L1149.2 334.5L1149.9 330.5L1150.6 326.5L1151.3 322.5L1152.1 318.5L1152.9 314.4L1153.7 310.4L1154.5 306.4L1155.3 302.3L1156.2 298.2L1157.1 294.0L1158.0 289.9L1159.0 285.7L1159.9 281.7L1160.9 277.8L1161.9 273.9L1162.9 270.3L1164.0 266.7L1165.1 263.2L1166.2 259.9L1167.3 256.7L1168.3 253.7L1169.3 250.7L1170.2 247.9L1171.0 245.2L1171.8 242.6L1172.5 240.0L1173.2 237.5L1173.9 235.0L1174.7 232.5L1175.5 229.8L1176.4 227.0L1177.4 224.2L1178.4 221.3L1179.4 218.3L1180.5 215.3L1181.7 212.3L1182.9 209.2L1184.1 206.1L1185.4 203.1L1186.7 200.1L1188.1 197.2L1189.5 194.2L1190.9 191.2L1192.4 188.2L1194.0 185.2L1195.7 182.2L1197.5 179.2L1199.3 176.1L1201.2 173.1L1203.3 170.0L1205.4 166.8L1207.5 163.8L1209.8 160.7L1212.1 157.7L1214.5 154.9L1216.9 152.2L1219.4 149.6L1222.0 147.1L1224.5 144.8L1227.1 142.5L1229.7 140.3L1232.4 138.1L1235.1 135.9L1237.8 133.6L1240.7 131.3L1243.7 129.0L1246.7 126.8L1249.8 124.5L1252.9 122.4L1256.0 120.3L1259.1 118.4L1262.2 116.6L1265.3 115.0L1268.4 113.5L1271.4 112.1L1274.5 110.8L1277.5 109.6L1280.5 108.5L1283.5 107.4L1286.5 106.3L1289.4 105.3L1292.4 104.4L1295.3 103.6L1298.3 102.8L1301.4 102.0L1304.6 101.3L1308.0 100.7L1311.7 100.1L1315.8 99.5L1320.1 98.9L1324.3 98.5L1328.3 98.1L1332.0 97.7L1335.0 97.4L1337.2 97.1L1338.8 112.3L1336.5 112.5L1333.5 112.8L1329.9 113.1L1325.9 113.5L1321.8 114.0L1317.7 114.5L1314.0 115.0L1310.6 115.5L1307.6 116.1L1304.7 116.7L1302.0 117.4L1299.3 118.1L1296.6 118.8L1294.0 119.6L1291.3 120.5L1288.5 121.4L1285.7 122.5L1282.9 123.5L1280.2 124.6L1277.4 125.8L1274.7 127.0L1272.0 128.3L1269.3 129.7L1266.7 131.2L1264.0 132.9L1261.2 134.7L1258.3 136.6L1255.5 138.7L1252.6 140.8L1249.8 143.0L1247.0 145.2L1244.3 147.3L1241.7 149.5L1239.2 151.6L1236.7 153.6L1234.3 155.7L1232.0 157.8L1229.8 160.0L1227.6 162.2L1225.5 164.5L1223.4 167.0L1221.4 169.6L1219.3 172.3L1217.3 175.1L1215.4 178.0L1213.5 180.9L1211.7 183.8L1209.9 186.6L1208.3 189.4L1206.7 192.1L1205.3 194.9L1203.8 197.7L1202.5 200.5L1201.2 203.2L1199.9 206.1L1198.6 208.9L1197.4 211.7L1196.2 214.5L1195.1 217.4L1194.0 220.3L1192.9 223.2L1191.9 226.0L1190.9 228.8L1190.0 231.6L1189.1 234.2L1188.3 236.6L1187.6 239.0L1186.9 241.4L1186.2 243.9L1185.5 246.5L1184.7 249.2L1183.8 252.1L1182.8 255.1L1181.8 258.2L1180.7 261.3L1179.6 264.5L1178.6 267.6L1177.5 270.9L1176.5 274.2L1175.5 277.7L1174.5 281.3L1173.6 285.0L1172.6 289.0L1171.7 293.0L1170.8 297.0L1169.9 301.1L1169.0 305.2L1168.1 309.2L1167.3 313.2L1166.5 317.1L1165.7 321.1L1165.0 325.0L1164.2 329.0L1163.5 332.9L1162.8 336.9L1162.1 340.9L1161.4 344.9L1160.7 348.9L1160.1 353.0L1159.4 357.0L1158.8 361.0L1158.1 365.0L1157.5 368.9L1157.0 372.7L1156.4 376.4L1155.9 379.9L1155.4 383.4L1154.9 386.8L1154.4 390.2L1153.9 393.6L1153.5 397.2L1153.0 400.8L1152.6 404.5L1152.2 408.4L1151.8 412.4L1151.4 416.4L1151.1 420.5L1150.6 424.6L1150.2 428.8L1149.6 432.9L1149.1 436.9L1148.5 441.0L1147.8 445.0L1147.2 449.1L1146.5 453.1L1145.7 457.1L1145.0 461.1L1144.2 465.2L1143.4 469.3L1142.5 473.6L1141.6 478.0L1140.6 482.3L1139.7 486.5L1138.7 490.5L1137.9 494.1L1137.1 497.4L1136.4 500.2L1135.7 502.5L1135.1 504.5L1134.5 506.4L1134.0 508.0L1133.4 509.7L1132.8 511.3L1132.2 513.2L1131.5 515.2L1130.7 517.3L1130.0 519.4L1129.2 521.6L1128.3 523.8L1127.4 526.1L1126.4 528.4L1125.3 530.6L1124.2 532.9L1123.0 535.1L1121.7 537.2L1120.5 539.3L1119.2 541.4L1117.9 543.4L1116.7 545.4L1115.5 547.3L1114.4 549.3L1113.2 551.3L1112.0 553.4L1110.8 555.4L1109.6 557.5L1108.4 559.5L1107.1 561.4L1105.9 563.3L1104.8 565.0L1103.6 566.5L1102.6 568.0L1101.5 569.4L1100.3 570.7L1099.2 572.1L1098.0 573.4L1096.7 574.8L1095.4 576.3L1094.0 577.8L1092.5 579.3L1090.9 580.8L1089.3 582.4L1087.6 584.0L1085.8 585.5L1083.9 587.0L1081.9 588.5L1079.9 589.9L1077.8 591.3L1075.6 592.7L1073.4 594.0L1071.2 595.3L1069.0 596.5L1066.8 597.6L1064.6 598.7L1062.4 599.6L1060.3 600.5L1058.1 601.3L1056.0 602.0L1053.9 602.7L1051.9 603.4L1049.9 604.0L1047.8 604.6L1045.8 605.2L1043.7 605.8L1041.7 606.3L1039.6 606.8L1037.5 607.3L1035.3 607.7L1033.1 608.1L1030.6 608.5L1028.0 608.9L1025.3 609.2L1022.6 609.4L1020.1 609.7L1017.8 609.9L1016.0 610.0L1014.0 610.2Z" fill="#f9b010"/><path d="M1335.3 85.5L1374 103L1336.7 123.3Z" fill="#f9b010"/></g>
<path d="M845.500 387.500v12.500l2.800-2.600 2.300 5.300 2-.9-2.300-5.200h4z" fill="#fff" stroke="#111" stroke-width="1" stroke-linejoin="round"/>
<!--/ARROW-->
<!-- connector line -->
<path d="M1685 126L1563 359" stroke="#f9b427" stroke-width="5" fill="none"/>
<!-- small highlight -->
<rect x="1537" y="87" width="317" height="36" fill="none" stroke="#fab52a" stroke-width="6"/>
<!-- big box -->
<rect x="1233" y="364" width="622" height="60" fill="#2a2a2a"/>
<rect x="1242" y="368" width="613" height="40" fill="#ececec"/>
<rect x="1230" y="361" width="628" height="66" fill="none" stroke="#fab52a" stroke-width="6"/>
<!-- exclamation box -->
<rect x="1698" y="14" width="30" height="53" fill="url(#og)" filter="url(#sh)"/>
<rect x="1711" y="27" width="3" height="19" fill="#111"/><rect x="1711" y="50" width="3" height="3" fill="#111"/>
<!-- short arrow -->
<path d="M1610.7 72.7L1642.7 35.3L1648 49L1667 42.2L1672 54.4L1655.7 62L1658.7 76.5Z" fill="#fbb62b" filter="url(#sh)"/>
</svg>
<div id="bigexpr" class="t expr" style="left:1258px;top:378px;font-size:23px;letter-spacing:0.3px;color:#2a2a2a;"><b>normal</b><i>(</i><u>0</u><i>,</i> ProductIn<i>.</i>ProcessTime<i>,</i> ProductIn<i>.</i>Deviation<i>)</i></div>

</body>
</html>
